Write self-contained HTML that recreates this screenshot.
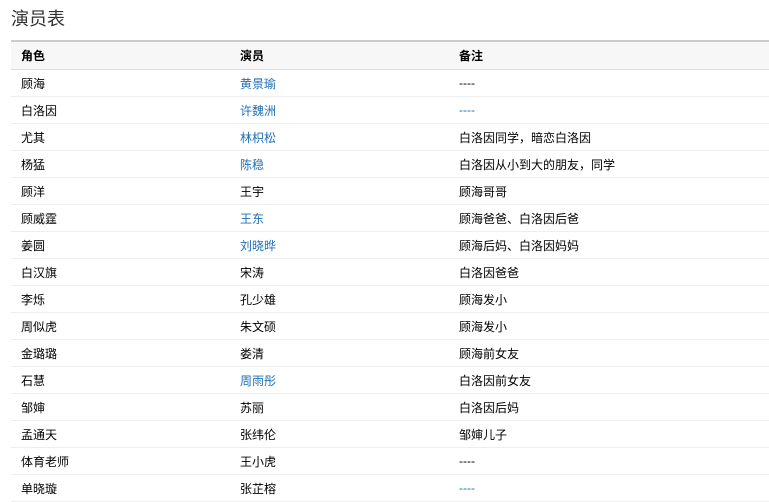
<!DOCTYPE html>
<html><head><meta charset="utf-8"><style>
body{margin:0;width:769px;height:502px;overflow:hidden;background:#fff;font-family:"Liberation Sans","Noto Sans CJK SC",sans-serif;}
h2{position:absolute;left:11px;top:7px;margin:0;font-size:18px;font-weight:normal;color:#333;line-height:24px;}
table{position:absolute;left:11px;top:40px;width:758px;border-collapse:collapse;font-size:12px;color:#000;}
thead tr{background:#f7f7f7;}
th{text-align:left;font-weight:bold;height:27px;padding:0 0 0 10px;border-top:2px solid #ccc;border-bottom:1px solid #ddd;}
td{height:26px;padding:0 0 0 10px;border-bottom:1px solid #eee;}
td:nth-child(1),th:nth-child(1){width:209px;}
td:nth-child(2),th:nth-child(2){width:209px;}
a{color:#1f6fb5;text-decoration:none;}
</style></head><body>
<h2>演员表</h2>
<table>
<thead><tr><th>角色</th><th>演员</th><th>备注</th></tr></thead>
<tbody>
<tr><td>顾海</td><td><a>黄景瑜</a></td><td>----</td></tr>
<tr><td>白洛因</td><td><a>许魏洲</a></td><td><a>----</a></td></tr>
<tr><td>尤其</td><td><a>林枳松</a></td><td>白洛因同学，暗恋白洛因</td></tr>
<tr><td>杨猛</td><td><a>陈稳</a></td><td>白洛因从小到大的朋友，同学</td></tr>
<tr><td>顾洋</td><td>王宇</td><td>顾海哥哥</td></tr>
<tr><td>顾威霆</td><td><a>王东</a></td><td>顾海爸爸、白洛因后爸</td></tr>
<tr><td>姜圆</td><td><a>刘晓晔</a></td><td>顾海后妈、白洛因妈妈</td></tr>
<tr><td>白汉旗</td><td>宋涛</td><td>白洛因爸爸</td></tr>
<tr><td>李烁</td><td>孔少雄</td><td>顾海发小</td></tr>
<tr><td>周似虎</td><td>朱文硕</td><td>顾海发小</td></tr>
<tr><td>金璐璐</td><td>娄清</td><td>顾海前女友</td></tr>
<tr><td>石慧</td><td><a>周雨彤</a></td><td>白洛因前女友</td></tr>
<tr><td>邹婶</td><td>苏丽</td><td>白洛因后妈</td></tr>
<tr><td>孟通天</td><td>张纬伦</td><td>邹婶儿子</td></tr>
<tr><td>体育老师</td><td>王小虎</td><td>----</td></tr>
<tr><td>单晓璇</td><td>张芷榕</td><td><a>----</a></td></tr>
</tbody>
</table>
</body></html>
